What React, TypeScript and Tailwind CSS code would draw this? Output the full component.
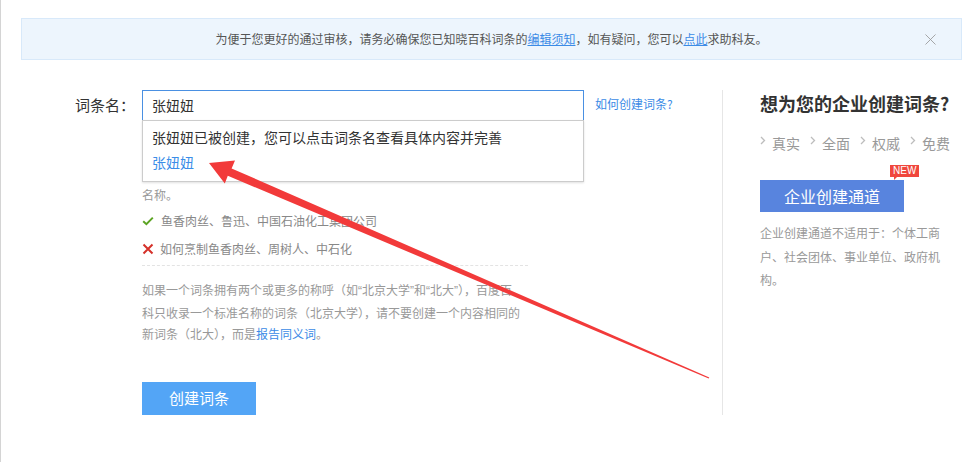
import { X } from 'lucide-react';

const FONT = "font-['Microsoft_YaHei','Noto_Sans_CJK_SC','Noto_Sans',sans-serif]";

function Chevron() {
  return (
    <svg className="w-[6px] h-[9px] mr-[6px] -mt-[6px]" viewBox="0 0 6 9">
      <path d="M1 1 L4.5 4.5 L1 8" fill="none" stroke="#bdbdbd" strokeWidth="1.3" />
    </svg>
  );
}

function Check() {
  return (
    <svg className="w-[12px] h-[12px] mr-[7px]" viewBox="0 0 12 12">
      <path d="M1.2 6.2 L4.4 9.2 L10.8 2.6" fill="none" stroke="#5ca423" strokeWidth="2" />
    </svg>
  );
}

function Cross() {
  return (
    <svg className="w-[12px] h-[12px] mr-[6px]" viewBox="0 0 12 12">
      <path d="M1.5 1.5 L10.5 10.5 M10.5 1.5 L1.5 10.5" fill="none" stroke="#d5312a" strokeWidth="2" />
    </svg>
  );
}

// 半角引号
function Q({ c }: { c: string }) {
  return <span className="font-['Liberation_Sans',sans-serif]">{c}</span>;
}

export default function App() {
  const features = ['真实', '全面', '权威', '免费'];

  return (
    <div className={`relative min-h-[462px] pt-[18px] bg-white border-l border-[#d4d4d4] ${FONT}`}>
      {/* 提示条 */}
      <div className="ml-[20px] mr-[15px] h-[42px] flex items-center justify-center relative bg-[#edf5fd] border border-[#d8e9fa] text-[12px] text-[#555]">
        <span>
          为便于您更好的通过审核，请务必确保您已知晓百科词条的
          <a className="text-[#3b8be6] underline">编辑须知</a>
          ，如有疑问，您可以
          <a className="text-[#3b8be6] underline">点此</a>
          求助科友。
        </span>
        <X className="absolute right-[21px] w-[19px] h-[19px] text-[#9a9a9a]" strokeWidth={1.1} />
      </div>

      <div className="flex mt-[30px]">
        {/* 左侧表单 */}
        <div className="w-[722px] pl-[74px] border-r border-[#e6e6e6] h-[325px]">
          <div className="flex items-center">
            <span className="w-[67px] text-[15px] text-[#333]">词条名：</span>
            <div className="relative">
              <div className="w-[442px] h-[31px] border border-[#4a90e2] flex items-center px-[9px] text-[14px] text-[#333]">
                张妞妞
              </div>
              <div className="absolute left-0 top-[30px] w-[442px] h-[62px] bg-white border border-[#cccccc] shadow-[0_1px_2px_rgba(0,0,0,0.12)] px-[9px] pt-[6px] z-10">
                <div className="text-[14px] text-[#333] leading-[20px]">张妞妞已被创建，您可以点击词条名查看具体内容并完善</div>
                <div className="text-[14px] text-[#3b8ee8] leading-[20px] mt-[5px]">张妞妞</div>
              </div>
            </div>
            <a className="ml-[11px] -mt-[4px] text-[12px] text-[#3b8be6]">如何创建词条?</a>
          </div>

          <div className="ml-[67px] mt-[63px] w-[386px] text-[12px]">
            <div className="leading-[21px] text-[#999]">名称。</div>
            <div className="flex items-center mt-[5px] h-[21px] text-[#888]">
              <Check />
              鱼香肉丝、鲁迅、中国石油化工集团公司
            </div>
            <div className="flex items-center mt-[7px] h-[21px] text-[#888]">
              <Cross />
              如何烹制鱼香肉丝、周树人、中石化
            </div>
            <div className="mt-[6px] border-t border-dashed border-[#e3e3e3]" />
            <div className="mt-[13px] leading-[21px] text-[#999] whitespace-nowrap">
              如果一个词条拥有两个或更多的称呼（如<Q c="“" />北京大学<Q c="”" />和<Q c="“" />北大<Q c="”" />），百度百
              <br />
              科只收录一个标准名称的词条（北京大学），请不要创建一个内容相同的
              <br />
              新词条（北大），而是<a className="text-[#3b8be6]">报告同义词</a>。
            </div>
          </div>

          <button className="ml-[67px] mt-[38px] w-[114px] h-[33px] bg-[#53a5f6] text-white text-[15px]">
            创建词条
          </button>
        </div>

        {/* 右侧企业入口 */}
        <div className="pl-[37px]">
          <h2 className="text-[18px] font-bold text-[#333] leading-[26px]">想为您的企业创建词条?</h2>
          <div className="flex items-center mt-[17px] text-[14px] text-[#999]">
            {features.map((f) => (
              <span key={f} className="flex items-center mr-[10px]">
                <Chevron />
                {f}
              </span>
            ))}
          </div>
          <div className="relative mt-[26px] w-[144px]">
            <button className="w-[144px] h-[32px] bg-[#5884de] text-white text-[16px]">企业创建通道</button>
            <span className="absolute left-[130px] -top-[15px] h-[12px] px-[3px] bg-[#f0473d] text-white text-[10px] leading-[12px] font-['Liberation_Sans',sans-serif]">
              NEW
              <span className="absolute left-[4px] -bottom-[3px] w-0 h-0 border-t-[3px] border-t-[#f0473d] border-r-[3px] border-r-transparent" />
            </span>
          </div>
          <p className="mt-[9px] w-[186px] text-[12px] leading-[23.5px] text-[#999]">
            企业创建通道不适用于：个体工商户、社会团体、事业单位、政府机构。
          </p>
        </div>
      </div>

      {/* 红色标注箭头 */}
      <svg className="absolute left-0 top-0 w-[977px] h-[462px] pointer-events-none z-20" viewBox="0 0 977 462">
        <polygon
          points="208,163 234,160.5 230.6,168.4 708.3,377.4 707.7,378.6 226.8,175.8 223.8,183.5"
          fill="#f23a3a"
        />
      </svg>
    </div>
  );
}
